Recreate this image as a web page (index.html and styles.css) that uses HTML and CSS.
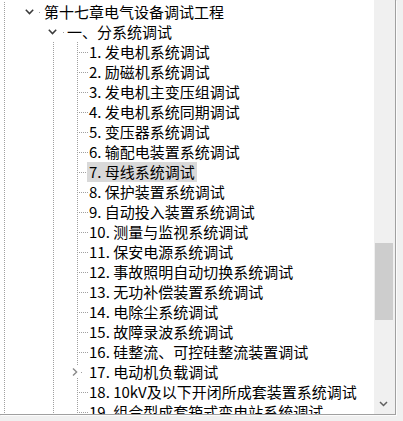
FILE: index.html
```html
<!DOCTYPE html>
<html lang="zh-CN">
<head>
<meta charset="utf-8">
<title>Tree</title>
<link rel="stylesheet" href="styles.css">
</head>
<body>
<div class="frame">
  <ul class="tree">
    <li class="row">
      <span class="g g0"></span>
      <span class="tog t0"><svg class="chev" width="9" height="6" viewBox="0 0 9 6"><path d="M0.8 0.8 L4.5 4.6 L8.2 0.8" /></svg><span class="dot d0"></span></span>
      <span class="label l0">第十七章电气设备调试工程</span>
    </li>
    <li class="row">
      <span class="g g0"></span>
      <span class="g gsp"></span>
      <span class="tog t1"><svg class="chev" width="9" height="6" viewBox="0 0 9 6"><path d="M0.8 0.8 L4.5 4.6 L8.2 0.8" /></svg><span class="dot d1"></span></span>
      <span class="label">一、分系统调试</span>
    </li>
    <li class="row"><span class="g g0"></span><span class="g gsp"></span><span class="g gv"></span><span class="g gbr"><span class="h"></span></span><span class="label">1. 发电机系统调试</span></li>
    <li class="row"><span class="g g0"></span><span class="g gsp"></span><span class="g gv"></span><span class="g gbr"><span class="h"></span></span><span class="label">2. 励磁机系统调试</span></li>
    <li class="row"><span class="g g0"></span><span class="g gsp"></span><span class="g gv"></span><span class="g gbr"><span class="h"></span></span><span class="label">3. 发电机主变压组调试</span></li>
    <li class="row"><span class="g g0"></span><span class="g gsp"></span><span class="g gv"></span><span class="g gbr"><span class="h"></span></span><span class="label">4. 发电机系统同期调试</span></li>
    <li class="row"><span class="g g0"></span><span class="g gsp"></span><span class="g gv"></span><span class="g gbr"><span class="h"></span></span><span class="label">5. 变压器系统调试</span></li>
    <li class="row"><span class="g g0"></span><span class="g gsp"></span><span class="g gv"></span><span class="g gbr"><span class="h"></span></span><span class="label">6. 输配电装置系统调试</span></li>
    <li class="row"><span class="g g0"></span><span class="g gsp"></span><span class="g gv"></span><span class="g gbr"><span class="h"></span></span><span class="label sel">7. 母线系统调试</span></li>
    <li class="row"><span class="g g0"></span><span class="g gsp"></span><span class="g gv"></span><span class="g gbr"><span class="h"></span></span><span class="label">8. 保护装置系统调试</span></li>
    <li class="row"><span class="g g0"></span><span class="g gsp"></span><span class="g gv"></span><span class="g gbr"><span class="h"></span></span><span class="label">9. 自动投入装置系统调试</span></li>
    <li class="row"><span class="g g0"></span><span class="g gsp"></span><span class="g gv"></span><span class="g gbr"><span class="h"></span></span><span class="label">10. 测量与监视系统调试</span></li>
    <li class="row"><span class="g g0"></span><span class="g gsp"></span><span class="g gv"></span><span class="g gbr"><span class="h"></span></span><span class="label">11. 保安电源系统调试</span></li>
    <li class="row"><span class="g g0"></span><span class="g gsp"></span><span class="g gv"></span><span class="g gbr"><span class="h"></span></span><span class="label">12. 事故照明自动切换系统调试</span></li>
    <li class="row"><span class="g g0"></span><span class="g gsp"></span><span class="g gv"></span><span class="g gbr"><span class="h"></span></span><span class="label">13. 无功补偿装置系统调试</span></li>
    <li class="row"><span class="g g0"></span><span class="g gsp"></span><span class="g gv"></span><span class="g gbr"><span class="h"></span></span><span class="label">14. 电除尘系统调试</span></li>
    <li class="row"><span class="g g0"></span><span class="g gsp"></span><span class="g gv"></span><span class="g gbr"><span class="h"></span></span><span class="label">15. 故障录波系统调试</span></li>
    <li class="row"><span class="g g0"></span><span class="g gsp"></span><span class="g gv"></span><span class="g gbr"><span class="h"></span></span><span class="label">16. 硅整流、可控硅整流装置调试</span></li>
    <li class="row"><span class="g g0"></span><span class="g gsp"></span><span class="g gv"></span><span class="g gtog"><svg class="chev-r" width="8" height="12" viewBox="0 0 8 12"><rect width="8" height="12" fill="#fff"/><path d="M2 2.5 L5.6 6 L2 9.5" /></svg><span class="dot d2"></span></span><span class="label">17. 电动机负载调试</span></li>
    <li class="row"><span class="g g0"></span><span class="g gsp"></span><span class="g gv"></span><span class="g gbr"><span class="h"></span></span><span class="label">18. 10kV及以下开闭所成套装置系统调试</span></li>
    <li class="row"><span class="g g0"></span><span class="g gsp"></span><span class="g gv"></span><span class="g gbr"><span class="h"></span></span><span class="label">19. 组合型成套箱式变电站系统调试</span></li>
  </ul>
  <div class="vscroll">
    <div class="track-top"></div>
    <div class="thumb"></div>
    <div class="track-rest"></div>
    <div class="arrow-btn"><svg width="9" height="6" viewBox="0 0 9 6"><path d="M1 1 L4.5 4.5 L8 1" /></svg></div>
  </div>
</div>
</body>
</html>
```

FILE: styles.css
```css
html, body {
  margin: 0;
  padding: 0;
}
body {
  background: #f0f0f0;
  width: 403px;
  height: 421px;
  overflow: hidden;
}
.frame {
  display: flex;
  width: 395px;
  height: 414px;
  background: #fff;
  border-right: 1px solid #a0a0a0;
  border-bottom: 1px solid #a0a0a0;
  box-shadow: 1px 1px 0 #fcfcfc;
}
.tree {
  list-style: none;
  margin: 0;
  padding: 2px 0 0 0;
  width: 374px;
  flex: none;
  overflow: hidden;
  font-family: "Noto Sans CJK SC", "Noto Sans", sans-serif;
  font-size: 15px;
  color: #000;
}
.row {
  display: flex;
  height: 20px;
  line-height: 20px;
  white-space: nowrap;
}
.g {
  flex: none;
  height: 20px;
}
.g0 {
  width: 17px;
  background-image: linear-gradient(to bottom, #a0a0a0 50%, transparent 50%);
  background-size: 1px 2px;
  background-repeat: repeat-y;
  background-position: 4px 0;
}
.gsp {
  width: 24px;
}
.gv {
  width: 24px;
  background-image: linear-gradient(to bottom, #a0a0a0 50%, transparent 50%);
  background-size: 1px 2px;
  background-repeat: repeat-y;
  background-position: 12px 0;
}
.gbr, .gtog {
  width: 22px;
  background-image: linear-gradient(to bottom, #a0a0a0 50%, transparent 50%);
  background-size: 1px 2px;
  background-repeat: repeat-y;
  background-position: 12px 0;
}
.gbr .h {
  display: block;
  width: 9px;
  height: 1px;
  margin: 10px 0 0 14px;
  background-image: linear-gradient(to right, #a0a0a0 50%, transparent 50%);
  background-size: 2px 1px;
  background-repeat: repeat-x;
}
.gtog {
  display: flex;
  align-items: center;
  padding-left: 6px;
  box-sizing: border-box;
}
.chev-r {
  display: block;
  flex: none;
}
.chev-r path {
  fill: none;
  stroke: #8a8a8a;
  stroke-width: 1.4;
}
.tog {
  flex: none;
  width: 24px;
  height: 20px;
  display: flex;
  align-items: center;
  box-sizing: border-box;
}
.t0 { padding-left: 8px; }
.t1 { padding-left: 7px; }
.chev {
  display: block;
  flex: none;
}
.chev path {
  fill: none;
  stroke: #3a3a3a;
  stroke-width: 1.5;
}
.dot {
  flex: none;
  width: 1px;
  height: 1px;
  background: #a0a0a0;
}
.d0 { margin-left: 5px; }
.d1 { margin-left: 6px; }
.d2 { margin-left: 2px; }
.label {
  flex: none;
  padding: 0 2px;
  height: 20px;
}
.l0 {
  margin-left: 1px;
}
.sel {
  background: #d9d9d9;
}
.vscroll {
  flex: none;
  width: 21px;
  background: #f0f0f0;
  display: flex;
  flex-direction: column;
}
.track-top {
  flex: none;
  height: 243px;
}
.thumb {
  flex: none;
  height: 77px;
  margin: 0 2px 0 1px;
  background: #cdcdcd;
}
.track-rest {
  flex: 1;
}
.arrow-btn {
  flex: none;
  height: 21px;
  display: flex;
  align-items: center;
  justify-content: center;
  padding-right: 2px;
}
.arrow-btn svg {
  display: block;
}
.arrow-btn path {
  fill: none;
  stroke: #606060;
  stroke-width: 1.5;
}
```
